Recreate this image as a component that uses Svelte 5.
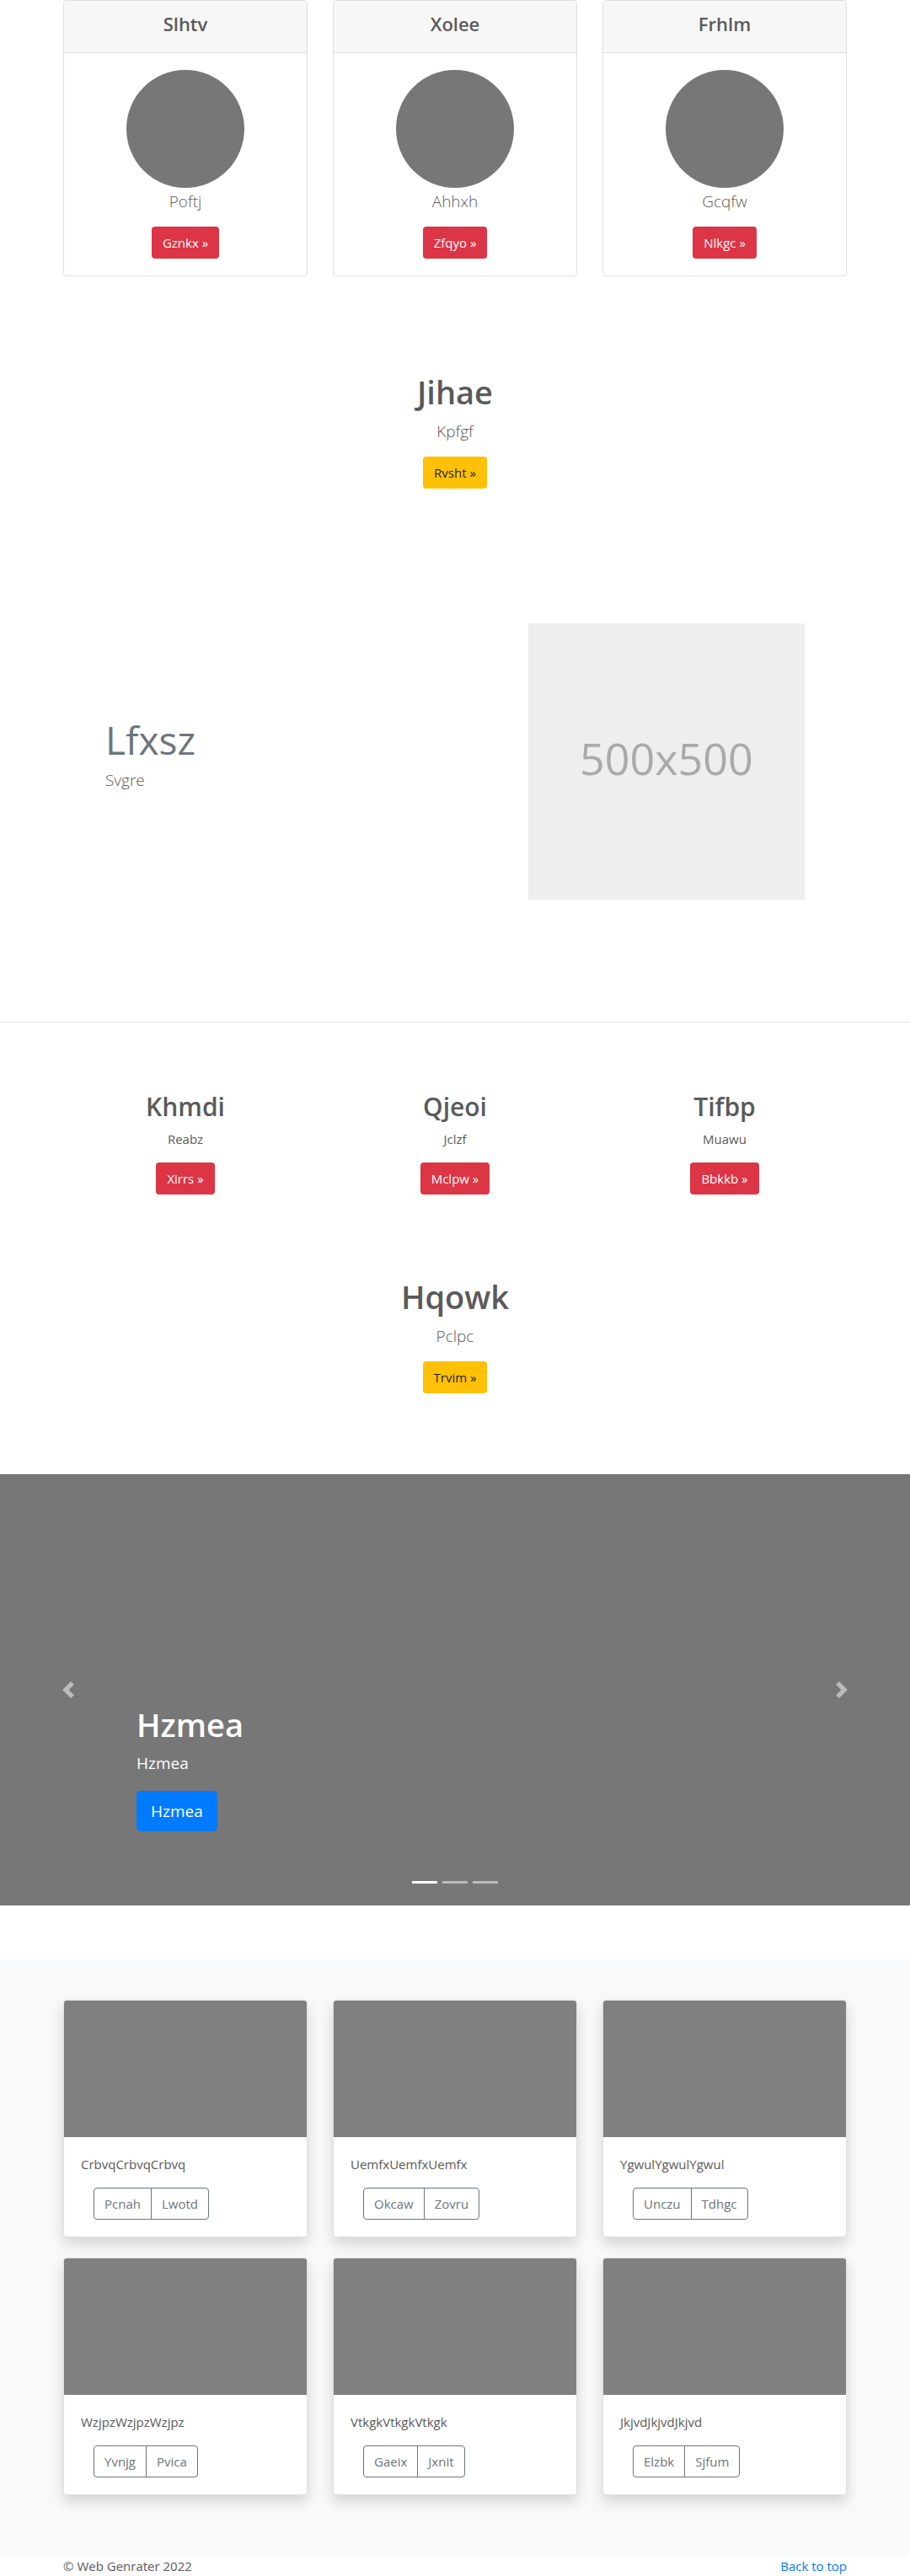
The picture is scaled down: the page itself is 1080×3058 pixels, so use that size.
<script>
  const plans = [
    { title: 'Slhtv', text: 'Poftj', action: 'Gznkx' },
    { title: 'Xolee', text: 'Ahhxh', action: 'Zfqyo' },
    { title: 'Frhlm', text: 'Gcqfw', action: 'Nlkgc' }
  ];
  const columns = [
    { title: 'Khmdi', text: 'Reabz', action: 'Xirrs' },
    { title: 'Qjeoi', text: 'Jclzf', action: 'Mclpw' },
    { title: 'Tifbp', text: 'Muawu', action: 'Bbkkb' }
  ];
  const albums = [
    { text: 'CrbvqCrbvqCrbvq', actions: ['Pcnah', 'Lwotd'] },
    { text: 'UemfxUemfxUemfx', actions: ['Okcaw', 'Zovru'] },
    { text: 'YgwulYgwulYgwul', actions: ['Unczu', 'Tdhgc'] },
    { text: 'WzjpzWzjpzWzjpz', actions: ['Yvnjg', 'Pvica'] },
    { text: 'VtkgkVtkgkVtkgk', actions: ['Gaeix', 'Jxnit'] },
    { text: 'JkjvdJkjvdJkjvd', actions: ['Elzbk', 'Sjfum'] }
  ];
  let slide = $state(0);
  const move = (step) => (slide = (slide + step + 3) % 3);
</script>

<main>
  <section class="container grid plans">
    {#each plans as plan}
      <article class="card">
        <header><h4>{plan.title}</h4></header>
        <div class="plan-body">
          <div class="avatar"></div>
          <p class="lead">{plan.text}</p>
          <a class="btn danger" href="#top">{plan.action} »</a>
        </div>
      </article>
    {/each}
  </section>

  <section class="container intro">
    <h1>Jihae</h1>
    <p class="lead">Kpfgf</p>
    <a class="btn warning" href="#top">Rvsht »</a>
  </section>

  <section class="featurette">
    <div class="feature-text">
      <h2>Lfxsz</h2>
      <p class="lead">Svgre</p>
    </div>
    <div class="placeholder">500x500</div>
  </section>

  <hr />

  <section class="container grid columns">
    {#each columns as column}
      <div class="column">
        <h2>{column.title}</h2>
        <p>{column.text}</p>
        <a class="btn danger" href="#top">{column.action} »</a>
      </div>
    {/each}
  </section>

  <section class="container intro second">
    <h1>Hqowk</h1>
    <p class="lead">Pclpc</p>
    <a class="btn warning" href="#top">Trvim »</a>
  </section>

  <section class="carousel">
    <button class="control prev" aria-label="Previous" onclick={() => move(-1)}>
      <svg viewBox="0 0 8 8" width="20" height="20" fill="#fff"><path d="M5.25 0l-4 4 4 4 1.5-1.5L4.250 4l2.5-2.500L5.250 0z" /></svg>
    </button>
    <div class="caption">
      <h1>Hzmea</h1>
      <p>Hzmea</p>
      <a class="btn primary" href="#top">Hzmea</a>
    </div>
    <button class="control next" aria-label="Next" onclick={() => move(1)}>
      <svg viewBox="0 0 8 8" width="20" height="20" fill="#fff"><path d="M2.750 0l-1.500 1.500L3.750 4l-2.500 2.500L2.750 8l4-4-4-4z" /></svg>
    </button>
    <div class="indicators">
      {#each [0, 1, 2] as index}
        <button class:active={slide === index} aria-label={`Slide ${index + 1}`} onclick={() => (slide = index)}></button>
      {/each}
    </div>
  </section>

  <section class="album">
    <div class="container grid album-grid">
      {#each albums as album}
        <article class="card shadow">
          <div class="thumb"></div>
          <div class="album-body">
            <p>{album.text}</p>
            <div class="group">
              {#each album.actions as action}
                <button>{action}</button>
              {/each}
            </div>
          </div>
        </article>
      {/each}
    </div>
  </section>
</main>

<footer class="container">
  <p>© Web Genrater 2022</p>
  <a href="#top">Back to top</a>
</footer>

<style>
  :global(body) {
    margin: 0;
    background: #fff;
    color: #5a5a5a;
    font: 400 15px/24px 'Segoe UI', 'Open Sans', 'Noto Sans', sans-serif;
  }
  main *, footer, footer * { box-sizing: border-box; }
  h1, h2, h4, p { margin: 0; }
  h1, h2, h4 { font-weight: 600; margin-bottom: 6px; }
  h1 { font-size: 38px; line-height: 50px; }
  h2 { font-size: 30px; line-height: 40px; }
  h4 { font-size: 22px; line-height: 31px; }
  p { margin-bottom: 16px; }
  a { color: #007bff; text-decoration: none; }
  button { font: inherit; cursor: pointer; }
  .lead { margin-bottom: 14px; font-size: 19px; line-height: 32px; font-weight: 300; }

  .container { width: 100%; max-width: 960px; margin: 0 auto; padding: 0 15px; }
  .grid { display: grid; grid-template-columns: repeat(3, 1fr); column-gap: 30px; }

  .btn {
    display: inline-block;
    padding: 6px 12px;
    border: 1px solid transparent;
    border-radius: 4px;
    vertical-align: top;
  }
  .danger { background: #dc3545; color: #fff; }
  .warning { background: #ffc107; color: #212529; }
  .primary {
    background: #007bff;
    color: #fff;
    padding: 8px 16px;
    border-radius: 5px;
    font-size: 19px;
    line-height: 30px;
  }

  .card {
    background: #fff;
    border: 1px solid #dfdfdf;
    border-radius: 4px;
    overflow: hidden;
  }
  .card header {
    padding: 12px 20px;
    background: #f7f7f7;
    border-bottom: 1px solid #dfdfdf;
  }
  .plans, .intro, .columns { text-align: center; }
  .plan-body { padding: 20px; }
  .avatar { width: 140px; height: 140px; margin: 0 auto; border-radius: 50%; background: #777; }

  .intro { padding-top: 112px; padding-bottom: 80px; }
  .featurette {
    display: grid;
    grid-template-columns: 7fr 5fr;
    align-items: center;
    max-width: 860px;
    margin: 80px auto 145px;
  }
  .feature-text { padding: 0 15px; }
  .feature-text h2 { color: #6c757d; font-size: 46px; line-height: 52px; font-weight: 400; }
  .placeholder {
    display: flex;
    align-items: center;
    justify-content: center;
    aspect-ratio: 1;
    margin: 0 15px;
    padding-bottom: 8px;
    background: #eee;
    color: #aaa;
    font-size: 52px;
    line-height: 60px;
  }
  hr { height: 1px; margin: 0; border: 0; background: #e5e5e5; }
  .columns { padding-top: 80px; }
  .second { padding-top: 96px; padding-bottom: 96px; }

  .carousel {
    position: relative;
    display: grid;
    grid-template-columns: 15% 1fr 15%;
    height: 512px;
    background: #777;
    color: #fff;
  }
  .control {
    display: flex;
    align-items: center;
    justify-content: center;
    padding: 0;
    border: 0;
    background: none;
    opacity: 0.5;
  }
  .caption { align-self: end; padding-bottom: 88px; }
  .caption p { margin-bottom: 18px; font-size: 19px; line-height: 30px; }
  .indicators {
    position: absolute;
    inset: auto 0 16px;
    display: flex;
    justify-content: center;
    gap: 6px;
  }
  .indicators button {
    width: 30px;
    height: 23px;
    padding: 0;
    border: solid transparent;
    border-width: 10px 0;
    background: #fff;
    background-clip: padding-box;
    opacity: 0.5;
  }
  .indicators .active { opacity: 1; }

  .album { margin-top: 64px; padding: 48px 0 72px; background: #f8f9fb; }
  .album-grid { row-gap: 24px; }
  .shadow { box-shadow: 0 8px 16px rgba(0, 0, 0, 0.15); }
  .thumb { height: 162px; background: #808080; }
  .album-body { padding: 20px; }
  .group { display: flex; padding-left: 15px; }
  .group button {
    padding: 6px 12px;
    border: 1px solid #6c757d;
    background: transparent;
    color: #6c757d;
  }
  .group button:first-child { border-radius: 4px 0 0 4px; }
  .group button:last-child { margin-left: -1px; border-radius: 0 4px 4px 0; }

  footer { display: flex; justify-content: space-between; }
  footer p { margin: 0; }
</style>
